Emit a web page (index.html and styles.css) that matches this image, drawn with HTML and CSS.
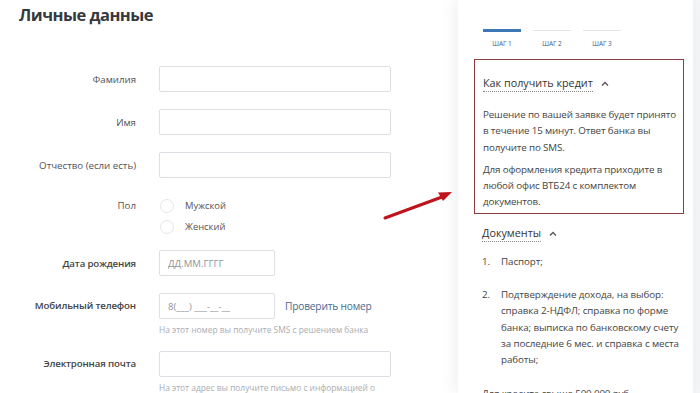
FILE: index.html
```html
<!DOCTYPE html>
<html lang="ru">
<head>
    <meta charset="UTF-8">
    <meta name="viewport" content="width=device-width, initial-scale=1.0">
    <title>Личные данные</title>
    <link rel="stylesheet" href="styles.css">
</head>
<body>
    <div class="page">
        <div class="main">
            <h1>Личные данные</h1>
            <form class="form">
                <div class="row row-first">
                    <label class="label">Фамилия</label>
                    <input class="input" type="text">
                </div>
                <div class="row">
                    <label class="label">Имя</label>
                    <input class="input" type="text">
                </div>
                <div class="row">
                    <label class="label">Отчество (если есть)</label>
                    <input class="input" type="text">
                </div>
                <div class="row row-gender">
                    <label class="label label-radio">Пол</label>
                    <div class="radios">
                        <div class="radio"><span class="circle"></span>Мужской</div>
                        <div class="radio"><span class="circle"></span>Женский</div>
                    </div>
                </div>
                <div class="row row-date">
                    <label class="label label-strong">Дата рождения</label>
                    <input class="input input-short" type="text" placeholder="ДД.ММ.ГГГГ">
                </div>
                <div class="row row-top">
                    <label class="label label-strong">Мобильный телефон</label>
                    <div class="field">
                        <div class="field-line">
                            <input class="input input-short" type="text" placeholder="8(___) ___-__-__">
                            <a class="check" href="#">Проверить номер</a>
                        </div>
                        <div class="hint">На этот номер вы получите SMS с решением банка</div>
                    </div>
                </div>
                <div class="row row-top row-email">
                    <label class="label label-strong">Электронная почта</label>
                    <div class="field">
                        <input class="input" type="text">
                        <div class="hint">На этот адрес вы получите письмо с информацией о</div>
                    </div>
                </div>
            </form>
        </div>

        <div class="aside">
            <div class="steps">
                <div class="step active"><span class="bar"></span>ШАГ 1</div>
                <div class="step"><span class="bar"></span>ШАГ 2</div>
                <div class="step"><span class="bar"></span>ШАГ 3</div>
            </div>

            <div class="box">
                <div class="toggle">
                    <span class="toggle-title">Как получить кредит</span>
                    <svg class="chevron" width="8" height="5" viewBox="0 0 8 5"><polyline points="1,4.5 4,1.5 7,4.5" fill="none" stroke="#555" stroke-width="1.3"/></svg>
                </div>
                <p>Решение по вашей заявке будет принято в течение 15 минут. Ответ банка вы получите по SMS.</p>
                <p>Для оформления кредита приходите в любой офис ВТБ24 с комплектом документов.</p>
            </div>

            <div class="docs">
                <div class="toggle">
                    <span class="toggle-title">Документы</span>
                    <svg class="chevron" width="8" height="5" viewBox="0 0 8 5"><polyline points="1,4.5 4,1.5 7,4.5" fill="none" stroke="#555" stroke-width="1.3"/></svg>
                </div>
                <ol class="list">
                    <li><span class="num">1.</span><span>Паспорт;</span></li>
                    <li><span class="num">2.</span><span>Подтверждение дохода, на выбор: справка 2-НДФЛ; справка по форме банка; выписка по банковскому счету за последние 6 мес. и справка с места работы;</span></li>
                </ol>
                <p class="more">Для кредита свыше 500 000 руб.</p>
            </div>
        </div>

        <svg class="arrow" width="80" height="40" viewBox="0 0 80 40">
            <line x1="5" y1="37" x2="62" y2="16" stroke="#c0141c" stroke-width="3" stroke-linecap="round"/>
            <polygon points="72,11 58,11.5 63,20" fill="#c0141c"/>
        </svg>
    </div>
</body>
</html>
```

FILE: styles.css
```css
body {
    margin: 0;
    background: #fff;
    font-family: 'Open Sans', 'Liberation Sans', sans-serif;
    color: #444;
}

.page {
    position: relative;
    display: flex;
    width: 700px;
    height: 393px;
    overflow: hidden;
    background: #f4f5f7;
}

.main {
    width: 458px;
    background: #fff;
}

h1 {
    margin: 3px 0 0 19px;
    font-size: 16.5px;
    line-height: 24px;
    font-weight: 700;
    letter-spacing: -0.5px;
    color: #363840;
}

.form {
    display: flex;
    flex-direction: column;
}

.row {
    display: flex;
    align-items: center;
    margin-top: 17px;
}

.row-first {
    margin-top: 39px;
}

.row-gender {
    align-items: flex-start;
    margin-top: 17px;
}

.row-date {
    margin-top: 13px;
}

.row-top {
    align-items: flex-start;
}

.row-top .label {
    line-height: 26px;
}

.row-email {
    margin-top: 14px;
}

.field {
    display: flex;
    flex-direction: column;
}

.label {
    width: 136px;
    margin-right: 23px;
    text-align: right;
    font-size: 9.7px;
    color: #4f5257;
}

.label-strong {
    font-weight: 600;
    letter-spacing: -0.15px;
    color: #444;
}

.label-radio {
    line-height: 21px;
}

.input {
    box-sizing: border-box;
    width: 232px;
    height: 26px;
    margin: 0;
    padding: 0 8px;
    border: 1px solid #dcdfe3;
    border-radius: 2px;
    font-family: inherit;
    font-size: 9.6px;
    color: #444;
    background: #fff;
}

.input::placeholder {
    color: #8f949a;
}

.input-short {
    width: 116px;
}

.field-line {
    display: flex;
    align-items: center;
}

.check {
    margin-left: 10px;
    font-size: 10.2px;
    letter-spacing: -0.2px;
    color: #4a6a8d;
    text-decoration: none;
}

.hint {
    margin-top: 4px;
    font-size: 8.4px;
    line-height: 14px;
    color: #a9adb2;
    white-space: nowrap;
}

.radios {
    display: flex;
    flex-direction: column;
}

.radio {
    display: flex;
    align-items: center;
    height: 21px;
    font-size: 9.4px;
    color: #555;
}

.circle {
    box-sizing: border-box;
    width: 14px;
    height: 14px;
    margin: 0 11px 0 1px;
    border: 1px solid #e4e6e9;
    border-radius: 50%;
}

.aside {
    box-sizing: border-box;
    width: 235px;
    padding: 0 9px 0 16px;
    background: #fff;
    box-shadow: -4px 0 14px rgba(40, 50, 70, 0.07);
}

.steps {
    display: flex;
    gap: 12px;
    margin: 30px 0 0 9px;
}

.step {
    display: flex;
    flex-direction: column;
    align-items: center;
    width: 38px;
    font-size: 6.5px;
    color: #3c5d86;
}

.bar {
    width: 38px;
    height: 1px;
    margin-bottom: 8px;
    background: #e2e5e9;
}

.step.active .bar {
    height: 3px;
    margin-top: -1px;
    margin-bottom: 7px;
    background: #3c77b6;
}

.box {
    margin-top: 11px;
    padding: 13px 2px 2px 8px;
    border: 1.5px solid #8e3c40;
}

.toggle {
    display: flex;
    align-items: center;
    height: 20px;
}

.toggle-title {
    font-size: 10.8px;
    line-height: 16px;
    color: #333;
    border-bottom: 1px dotted #8a8a8a;
}

.chevron {
    margin-left: 8px;
}

.box .toggle {
    margin-bottom: 14px;
}

.box p, .docs p {
    margin: 0 0 6px;
    font-size: 9.8px;
    line-height: 16.3px;
    letter-spacing: -0.15px;
    color: #454545;
}

.box p:last-child {
    margin-bottom: 0;
}

.docs {
    padding: 10px 0 0 8px;
}

.list {
    margin: 10px 0 0;
    padding: 0;
    list-style: none;
}

.list li {
    display: flex;
    margin-bottom: 17px;
    font-size: 9.8px;
    line-height: 16.3px;
    letter-spacing: -0.1px;
    color: #454545;
}

.num {
    width: 19px;
    flex-shrink: 0;
}

.docs .more {
    margin-top: 13px;
}

.arrow {
    position: absolute;
    left: 380px;
    top: 181px;
}
```
